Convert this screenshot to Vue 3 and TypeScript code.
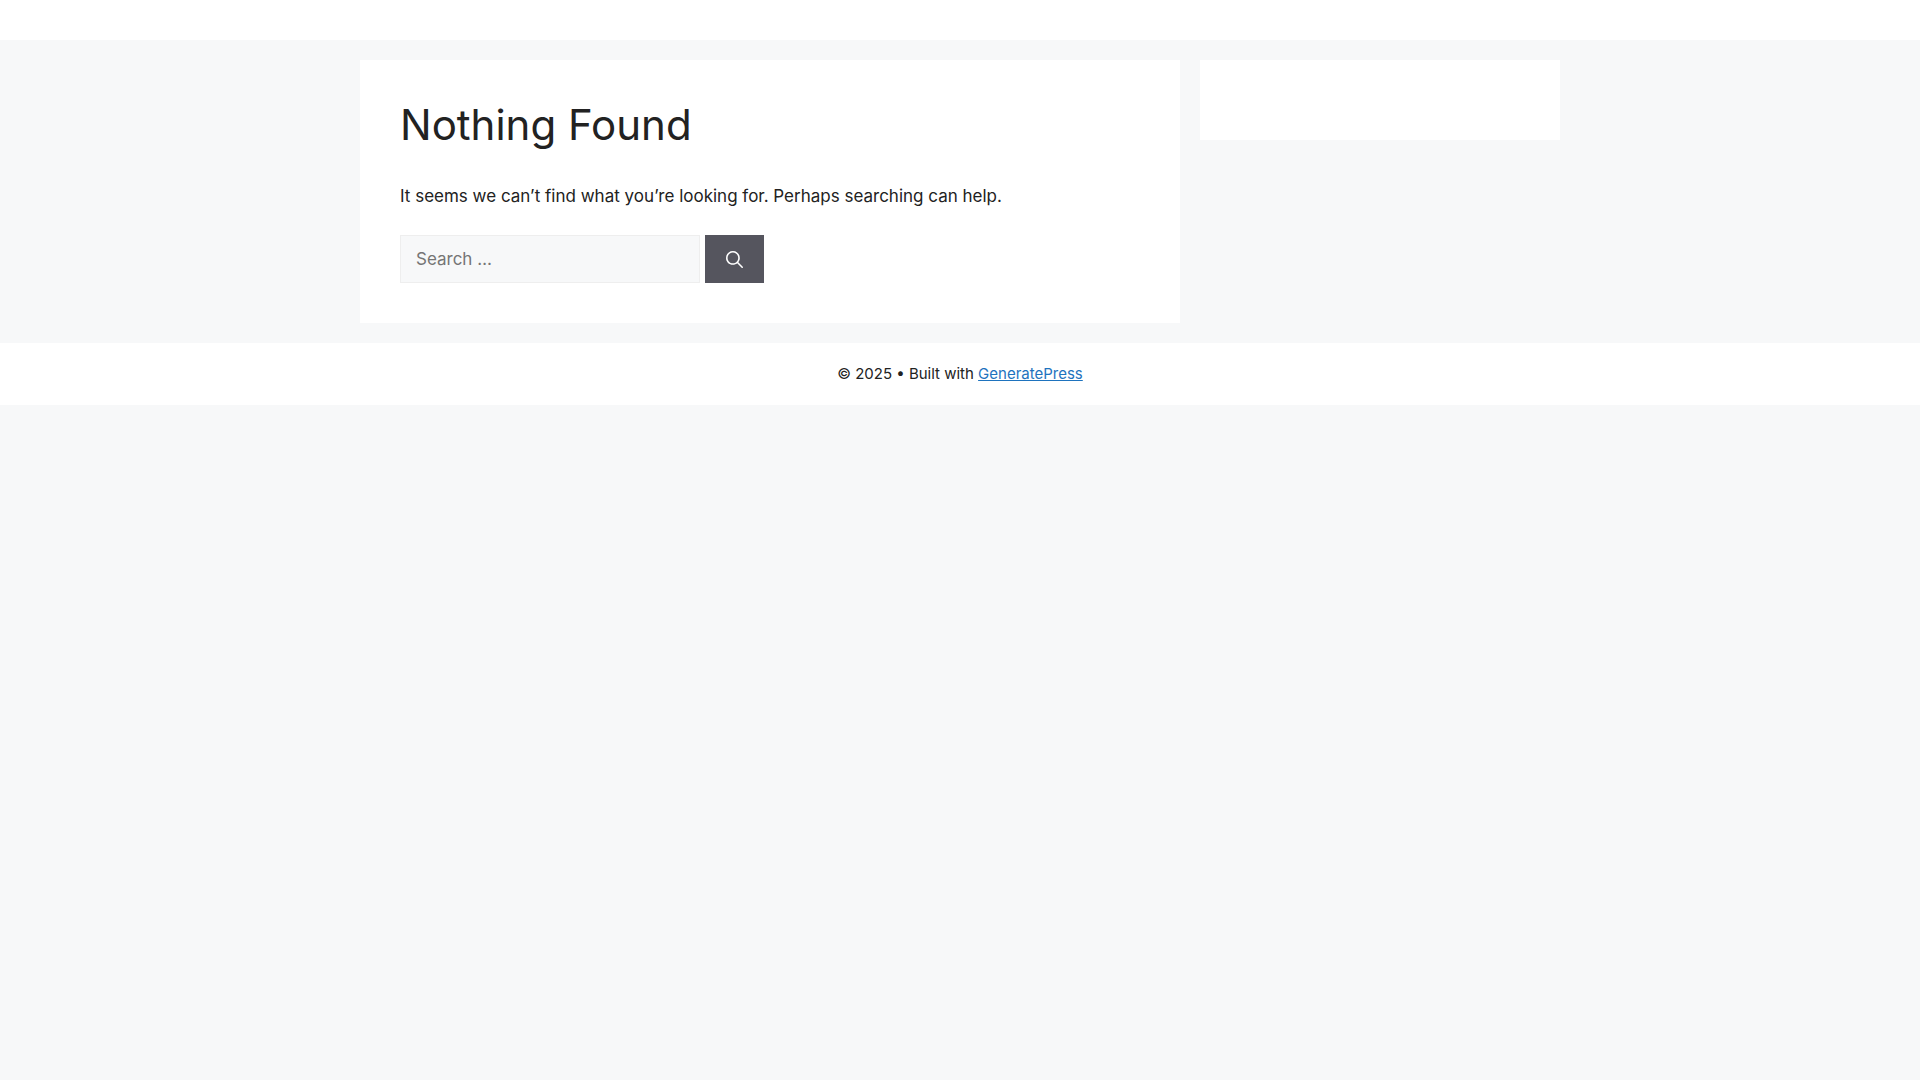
<script setup lang="ts">
import { ref } from 'vue'

const query = ref<string>('')
</script>

<template>
  <div class="page">
    <header class="site-header"></header>
    <div class="site-content">
      <main class="content">
        <h1>Nothing Found</h1>
        <p>It seems we can’t find what you’re looking for. Perhaps searching can help.</p>
        <form class="search-form" role="search" @submit.prevent>
          <input v-model="query" type="search" aria-label="Search for:" placeholder="Search …" />
          <button type="submit" aria-label="Search">
            <svg viewBox="0 0 512 512" width="17" height="17" aria-hidden="true">
              <path
                fill="currentColor"
                fill-rule="evenodd"
                clip-rule="evenodd"
                d="M208 48c-88.366 0-160 71.634-160 160s71.634 160 160 160 160-71.634 160-160S296.366 48 208 48zM0 208C0 93.125 93.125 0 208 0s208 93.125 208 208c0 48.741-16.765 93.566-44.843 129.024l133.826 134.018c9.366 9.379 9.355 24.575-.025 33.941-9.379 9.366-24.575 9.355-33.941-.025L337.238 370.987C301.747 399.167 256.839 416 208 416 93.125 416 0 322.875 0 208z"
              />
            </svg>
          </button>
        </form>
      </main>
      <aside class="sidebar"></aside>
    </div>
    <footer class="site-footer">
      <span>© 2025 • Built with <a href="#">GeneratePress</a></span>
    </footer>
  </div>
</template>

<style>
body {
  background: #f7f8f9;
}
</style>

<style scoped>
.page {
  color: #222222;
  font-family: Inter, "Liberation Sans", sans-serif;
  font-size: 17px;
  line-height: 26px;
}

.site-header {
  padding: 20px;
  background: #ffffff;
}

.site-content {
  display: flex;
  align-items: flex-start;
  gap: 20px;
  max-width: 1200px;
  margin: 0 auto;
  padding: 20px 0;
}

.content {
  flex: 1;
  padding: 40px;
  background: #ffffff;
}

h1 {
  margin: 0;
  font-size: 42px;
  font-weight: 400;
  line-height: 50px;
}

p {
  margin: 33px 0 26px;
}

.search-form {
  display: flex;
  gap: 5px;
}

input {
  box-sizing: border-box;
  width: 300px;
  height: 48px;
  padding: 10px 15px;
  border: 1px solid #eeeeee;
  border-radius: 0;
  background: #f7f8f9;
  color: #222222;
  font: inherit;
  appearance: none;
}

button {
  display: flex;
  align-items: center;
  padding: 0 21px;
  border: 0;
  background: #55555e;
  color: #ffffff;
  cursor: pointer;
}

.sidebar {
  flex: 0 1 360px;
  box-sizing: border-box;
  padding: 40px;
  background: #ffffff;
}

.site-footer {
  padding: 20px;
  background: #ffffff;
  font-size: 15px;
  line-height: 22px;
  text-align: center;
}

a {
  color: #1e73be;
}
</style>
